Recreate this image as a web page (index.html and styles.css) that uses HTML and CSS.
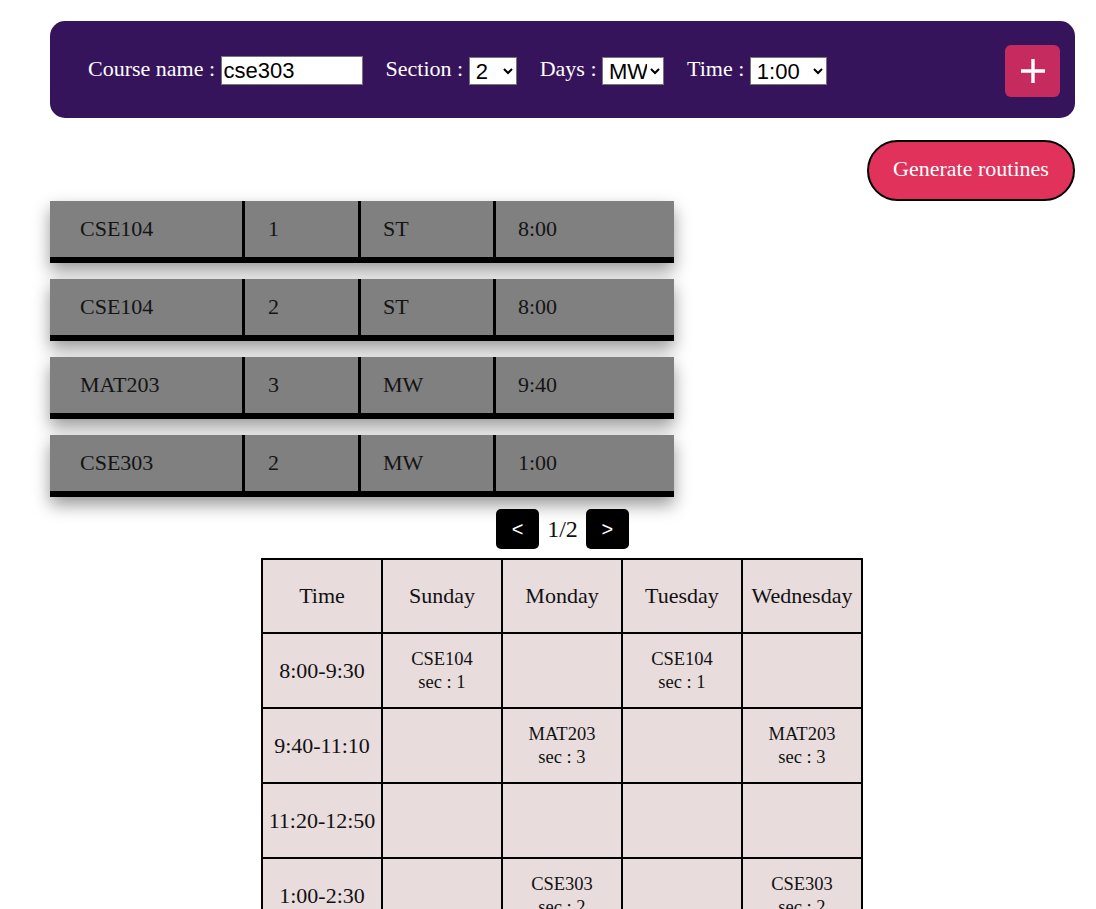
FILE: index.html
```html
<!DOCTYPE html>
<html>
<head>
<meta charset="utf-8">
<title>Routine generator</title>
<link rel="stylesheet" href="styles.css">
</head>
<body>
<div class="page">
  <form class="bar">
    <label class="field">Course name : <input class="name-input" type="text" value="cse303"></label>
    <label class="field">Section : <select class="sel sel-sec"><option>1</option><option selected>2</option><option>3</option></select></label>
    <label class="field">Days : <select class="sel sel-day"><option>ST</option><option selected>MW</option></select></label>
    <label class="field">Time : <select class="sel sel-time"><option>8:00</option><option>9:40</option><option selected>1:00</option></select></label>
    <button class="add" type="button" aria-label="Add">
      <svg width="26" height="26" viewBox="0 0 26 26"><path d="M13 1v24M1 13h24" stroke="#fff" stroke-width="3.4" fill="none"/></svg>
    </button>
  </form>

  <div class="gen-wrap"><button class="gen" type="button">Generate routines</button></div>

  <div class="courses">
    <div class="course"><div class="c c1">CSE104</div><div class="c c2">1</div><div class="c c3">ST</div><div class="c c4">8:00</div></div>
    <div class="course"><div class="c c1">CSE104</div><div class="c c2">2</div><div class="c c3">ST</div><div class="c c4">8:00</div></div>
    <div class="course"><div class="c c1">MAT203</div><div class="c c2">3</div><div class="c c3">MW</div><div class="c c4">9:40</div></div>
    <div class="course"><div class="c c1">CSE303</div><div class="c c2">2</div><div class="c c3">MW</div><div class="c c4">1:00</div></div>
  </div>

  <div class="pager">
    <button class="pg" type="button">&lt;</button>
    <span class="pg-text">1/2</span>
    <button class="pg" type="button">&gt;</button>
  </div>

  <table class="routine">
    <tr><th>Time</th><th>Sunday</th><th>Monday</th><th>Tuesday</th><th>Wednesday</th></tr>
    <tr><td class="t">8:00-9:30</td><td class="cls">CSE104<br>sec : 1</td><td></td><td class="cls">CSE104<br>sec : 1</td><td></td></tr>
    <tr><td class="t">9:40-11:10</td><td></td><td class="cls">MAT203<br>sec : 3</td><td></td><td class="cls">MAT203<br>sec : 3</td></tr>
    <tr><td class="t">11:20-12:50</td><td></td><td></td><td></td><td></td></tr>
    <tr><td class="t">1:00-2:30</td><td></td><td class="cls">CSE303<br>sec : 2</td><td></td><td class="cls">CSE303<br>sec : 2</td></tr>
  </table>
</div>
</body>
</html>
```

FILE: styles.css
```css
html::-webkit-scrollbar { display: none; }
html { scrollbar-width: none; }
body {
  margin: 0;
  font-family: "Liberation Serif", "Times New Roman", serif;
  font-size: 22px;
  color: #111;
  background: #fff;
}
.page {
  padding: 21px 21px 40px 50px;
}
.bar {
  display: flex;
  align-items: center;
  height: 97px;
  box-sizing: border-box;
  padding: 2px 15px 0 38px;
  background: #36145c;
  border-radius: 15px;
  color: #fff;
  margin: 0;
}
.field {
  margin-right: 23px;
  white-space: nowrap;
}
.name-input {
  font-family: "Liberation Sans", Arial, sans-serif;
  font-size: 22px;
  width: 142px;
  height: 29px;
  box-sizing: border-box;
  padding: 1px 2px;
  border: 1px solid #767676;
  vertical-align: middle;
  color: #000;
}
.sel {
  font-family: "Liberation Sans", Arial, sans-serif;
  font-size: 22px;
  height: 28px;
  padding: 0 0 0 2px;
  border: 1px solid #767676;
  border-radius: 0;
  background: #fff;
  color: #000;
  vertical-align: middle;
  box-sizing: border-box;
}
.sel-sec { width: 48px; }
.sel-day { width: 62px; }
.sel-time { width: 77px; }
.add {
  margin-left: auto;
  width: 55px;
  height: 52px;
  border: none;
  border-radius: 6px;
  background: #c52b5e;
  display: flex;
  align-items: center;
  justify-content: center;
  padding: 0;
}
.gen-wrap {
  display: flex;
  justify-content: flex-end;
  margin-top: 22px;
}
.gen {
  width: 208px;
  height: 61px;
  border: 2px solid #000;
  border-radius: 31px;
  background: #e0325a;
  color: #fff;
  font-family: "Liberation Serif", "Times New Roman", serif;
  font-size: 22px;
  padding: 0 0 3px;
}
.courses {
  display: flex;
  flex-direction: column;
  gap: 16px;
  width: 624px;
}
.course {
  display: grid;
  grid-template-columns: 195px 116px 135px 178px;
  height: 62px;
  box-sizing: border-box;
  background: #808080;
  border-bottom: 6px solid #000;
  box-shadow: 0 8px 16px rgba(0, 0, 0, 0.4);
}
.c {
  display: flex;
  align-items: center;
  padding-left: 22px;
  box-sizing: border-box;
  color: #141414;
}
.c1 { padding-left: 30px; border-right: 3px solid #000; }
.c2 { padding-left: 23px; border-right: 3px solid #000; }
.c3 { padding-left: 22px; border-right: 3px solid #000; }
.pager {
  display: flex;
  justify-content: center;
  align-items: center;
  gap: 8px;
  margin-top: 12px;
}
.pg {
  width: 43px;
  height: 40px;
  border: none;
  border-radius: 5px;
  background: #000;
  color: #fff;
  font-family: "Liberation Sans", Arial, sans-serif;
  font-size: 20px;
  padding: 0;
}
.pg-text { font-size: 24px; }
.routine {
  margin: 9px 0 0 211px;
  width: 602px;
  border-collapse: collapse;
  table-layout: fixed;
  background: #e8dcdd;
}
.routine th, .routine td {
  border: 2px solid #000;
  height: 73px;
  padding: 0;
  text-align: center;
  vertical-align: middle;
  font-weight: normal;
  font-size: 22px;
}
.routine th { height: 72px; }
.routine td.cls {
  font-size: 18.5px;
  line-height: 23px;
}
```
